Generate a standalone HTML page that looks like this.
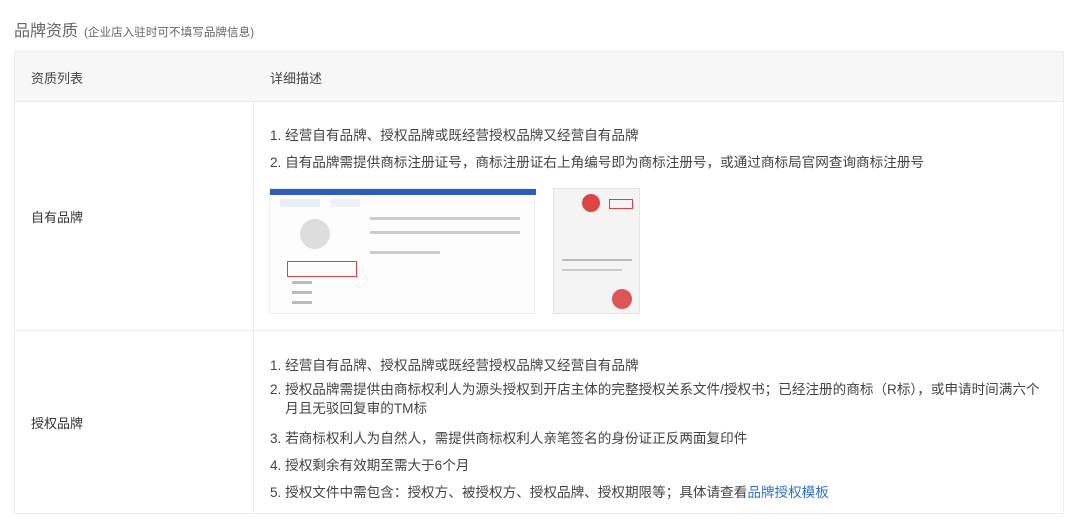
<!DOCTYPE html><html><head><meta charset="utf-8"><style>
body{margin:0;width:1080px;height:530px;background:#fff;font-family:"Liberation Sans","Noto Sans CJK SC",sans-serif;color:#333;overflow:hidden;position:relative}
.abs{position:absolute}
.t{left:14px;top:17px;font-size:16px;color:#666}
.t small{font-size:11.6px;color:#666;margin-left:6px}
.tbl{left:14px;top:51px;width:1050px;height:463px;border:1px solid #ececec;box-sizing:border-box}
.hd{left:15px;top:52px;width:1048px;height:49px;background:#f7f7f7;border-bottom:1px solid #ececec}
.vl{left:253px;top:101px;width:1px;height:412px;background:#ececec}
.hl{left:15px;top:330px;width:1048px;height:1px;background:#ececec}
.c{font-size:13px;color:#333;white-space:nowrap}
.l{left:270px;font-size:13.6px;color:#444;white-space:nowrap}
a{color:#2f72d3;text-decoration:none}
</style></head><body>
<div class="abs t">品牌资质<small>(企业店入驻时可不填写品牌信息)</small></div>
<div class="abs tbl"></div>
<div class="abs hd"></div>
<div class="abs vl"></div>
<div class="abs hl"></div>
<div class="abs c" style="left:31px;top:68px;color:#444">资质列表</div>
<div class="abs c" style="left:270px;top:68px;color:#444">详细描述</div>
<div class="abs c" style="left:31px;top:207px">自有品牌</div>
<div class="abs c" style="left:31px;top:413px">授权品牌</div>
<div class="abs l" style="top:124px">1. 经营自有品牌、授权品牌或既经营授权品牌又经营自有品牌</div>
<div class="abs l" style="top:151px">2. 自有品牌需提供商标注册证号，商标注册证右上角编号即为商标注册号，或通过商标局官网查询商标注册号</div>
<div class="abs" style="left:269px;top:188px;width:266px;height:126px;background:#fdfdfd;border:1px solid #eee;box-sizing:border-box">
<div class="abs" style="left:0;top:0;width:266px;height:6px;background:#2f5dbb"></div>
<div class="abs" style="left:10px;top:10px;width:40px;height:8px;background:#e8eef8"></div>
<div class="abs" style="left:60px;top:10px;width:30px;height:8px;background:#eef2f8"></div>
<div class="abs" style="left:30px;top:30px;width:30px;height:30px;border-radius:50%;background:#ddd"></div>
<div class="abs" style="left:100px;top:28px;width:150px;height:3px;background:#ccc"></div>
<div class="abs" style="left:100px;top:42px;width:150px;height:3px;background:#ccc"></div>
<div class="abs" style="left:100px;top:62px;width:70px;height:3px;background:#ccc"></div>
<div class="abs" style="left:17px;top:72px;width:68px;height:14px;border:1px solid #e04040"></div>
<div class="abs" style="left:22px;top:92px;width:20px;height:3px;background:#bbb"></div>
<div class="abs" style="left:22px;top:102px;width:20px;height:3px;background:#bbb"></div>
<div class="abs" style="left:22px;top:112px;width:20px;height:3px;background:#bbb"></div>
</div>
<div class="abs" style="left:553px;top:188px;width:87px;height:126px;background:#f4f4f4;border:1px solid #e4e4e4;box-sizing:border-box">
<div class="abs" style="left:28px;top:5px;width:18px;height:18px;border-radius:50%;background:#d44"></div>
<div class="abs" style="left:55px;top:10px;width:22px;height:8px;border:1px solid #e04040"></div>
<div class="abs" style="left:58px;top:100px;width:20px;height:20px;border-radius:50%;background:#d55"></div>
<div class="abs" style="left:8px;top:70px;width:70px;height:2px;background:#bbb"></div>
<div class="abs" style="left:8px;top:80px;width:60px;height:2px;background:#ccc"></div>
</div>
<div class="abs l" style="top:354px">1. 经营自有品牌、授权品牌或既经营授权品牌又经营自有品牌</div>
<div class="abs l" style="top:380px;line-height:19px">2. 授权品牌需提供由商标权利人为源头授权到开店主体的完整授权关系文件/授权书；已经注册的商标（R标），或申请时间满六个<br>&nbsp;&nbsp;&nbsp;&nbsp;月且无驳回复审的TM标</div>
<div class="abs l" style="top:427px">3. 若商标权利人为自然人，需提供商标权利人亲笔签名的身份证正反两面复印件</div>
<div class="abs l" style="top:454px">4. 授权剩余有效期至需大于6个月</div>
<div class="abs l" style="top:481px">5. 授权文件中需包含：授权方、被授权方、授权品牌、授权期限等；具体请查看<a>品牌授权模板</a></div>
</body></html>
